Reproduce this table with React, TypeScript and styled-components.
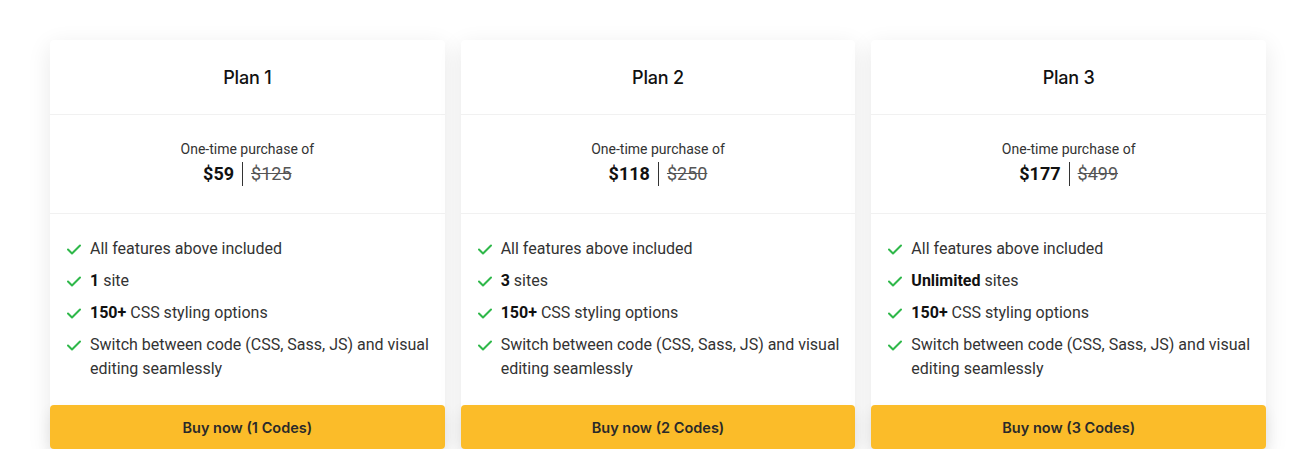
import React from "react";
import styled, { createGlobalStyle } from "styled-components";

const Global = createGlobalStyle`
  html, body { margin: 0; padding: 0; background: #ffffff; }
  body { font-family: Roboto, "Liberation Sans", sans-serif; color: #333; }
`;

const Page = styled.div`
  display: flex;
  gap: 16px;
  width: 1216px;
  padding: 40px 0 0 50px;
`;

const Card = styled.div`
  flex: 1 1 0;
  min-width: 0;
  background: #fff;
  display: flex;
  flex-direction: column;
  box-shadow: 0 6px 24px rgba(0, 0, 0, 0.09);
  border-radius: 4px;
`;

const Header = styled.div`
  height: 74px;
  display: flex;
  align-items: center;
  justify-content: center;
  border-bottom: 1px solid #f1f1f1;
  font-family: Inter, Roboto, sans-serif;
  font-size: 18px;
  font-weight: 500;
  color: #111;
  letter-spacing: -0.2px;
`;

const PriceBox = styled.div`
  height: 99px;
  box-sizing: border-box;
  display: flex;
  flex-direction: column;
  align-items: center;
  justify-content: center;
  gap: 3px;
  border-bottom: 1px solid #f1f1f1;
  padding-bottom: 4px;
`;

const Label = styled.div`
  font-size: 14px;
  color: #333;
  line-height: 20px;
`;

const PriceRow = styled.div`
  display: flex;
  align-items: center;
  font-size: 18px;
  line-height: 24px;
`;

const Now = styled.span`
  font-weight: 700;
  color: #111;
  padding-right: 8px;
  border-right: 1px solid #333;
`;

const Old = styled.span`
  color: #555;
  text-decoration: line-through;
  padding-left: 8px;
`;

const Features = styled.ul`
  list-style: none;
  margin: 0;
  padding: 23px 6px 16px 17px;
`;

const Feature = styled.li`
  display: flex;
  align-items: flex-start;
  gap: 9px;
  font-size: 16px;
  line-height: 24px;
  color: #333;
  margin-bottom: 8px;
  b { color: #111; font-weight: 700; }
`;

const Check = styled.svg`
  flex: 0 0 14px;
  width: 14px;
  height: 24px;
`;

const Button = styled.button`
  height: 44px;
  border: none;
  border-radius: 4px;
  background: #fbbc29;
  color: #2a2a2a;
  font-family: Inter, Roboto, sans-serif;
  font-size: 14.5px;
  font-weight: 600;
  cursor: pointer;
  box-shadow: 0 6px 14px rgba(0, 0, 0, 0.08);
`;

const Tick = () => (
  <Check viewBox="0 0 14 24">
    <path d="M1 12.5 L5 16.5 L13 8.5" fill="none" stroke="#2fb84a" strokeWidth="2" strokeLinecap="round" strokeLinejoin="round" />
  </Check>
);

const plans = [
  { name: "Plan 1", now: "$59", old: "$125", sites: "1", unit: "site", codes: 1 },
  { name: "Plan 2", now: "$118", old: "$250", sites: "3", unit: "sites", codes: 2 },
  { name: "Plan 3", now: "$177", old: "$499", sites: "Unlimited", unit: "sites", codes: 3 },
];

export default function App() {
  return (
    <>
      <Global />
      <Page>
        {plans.map((p) => (
          <Card key={p.name}>
            <Header>{p.name}</Header>
            <PriceBox>
              <Label>One-time purchase of</Label>
              <PriceRow>
                <Now>{p.now}</Now>
                <Old>{p.old}</Old>
              </PriceRow>
            </PriceBox>
            <Features>
              <Feature><Tick /><span>All features above included</span></Feature>
              <Feature><Tick /><span><b>{p.sites}</b> {p.unit}</span></Feature>
              <Feature><Tick /><span><b>150+</b> CSS styling options</span></Feature>
              <Feature><Tick /><span>Switch between code (CSS, Sass, JS) and visual editing seamlessly</span></Feature>
            </Features>
            <Button>Buy now ({p.codes} Codes)</Button>
          </Card>
        ))}
      </Page>
    </>
  );
}
